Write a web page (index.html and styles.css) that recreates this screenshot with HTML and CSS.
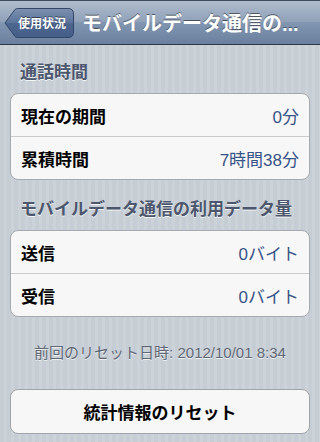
FILE: index.html
```html
<!DOCTYPE html>
<html lang="ja">
<head>
    <meta charset="UTF-8">
    <meta name="viewport" content="width=device-width, initial-scale=1.0">
    <title>モバイルデータ通信</title>
    <link rel="stylesheet" href="styles.css">
</head>
<body>

    <div class="navbar">
        <a class="back-button" href="#">
            <svg class="back-shape" width="70" height="30" viewBox="0 0 70 30">
                <defs>
                    <linearGradient id="backFill" x1="0" y1="0" x2="0" y2="1">
                        <stop offset="0" stop-color="#7d91b0"/>
                        <stop offset="0.5" stop-color="#5a739b"/>
                        <stop offset="0.5" stop-color="#4d678f"/>
                        <stop offset="1" stop-color="#445e88"/>
                    </linearGradient>
                </defs>
                <path d="M1 15 L11 1.5 Q12 0.5 13.5 0.5 L64 0.5 Q69.5 0.5 69.5 6 L69.5 24 Q69.5 29.5 64 29.5 L13.5 29.5 Q12 29.5 11 28.5 Z" fill="url(#backFill)" stroke="#34476a" stroke-width="1"/>
            </svg>
            <span class="back-label">使用状況</span>
        </a>
        <h1 class="nav-title">モバイルデータ通信の...</h1>
    </div>

    <div class="content">
        <h2 class="section-title first">通話時間</h2>
        <div class="group">
            <div class="row">
                <span class="row-label">現在の期間</span>
                <span class="row-value">0分</span>
            </div>
            <div class="row">
                <span class="row-label">累積時間</span>
                <span class="row-value">7時間38分</span>
            </div>
        </div>

        <h2 class="section-title">モバイルデータ通信の利用データ量</h2>
        <div class="group">
            <div class="row">
                <span class="row-label">送信</span>
                <span class="row-value">0バイト</span>
            </div>
            <div class="row">
                <span class="row-label">受信</span>
                <span class="row-value">0バイト</span>
            </div>
        </div>

        <p class="footer-note">前回のリセット日時: 2012/10/01 8:34</p>

        <button class="reset-button" type="button">統計情報のリセット</button>
    </div>

</body>
</html>
```

FILE: styles.css
```css
body {
    margin: 0;
    font-family: "Liberation Sans", "Noto Sans CJK JP", sans-serif;
    background-color: #c7ced5;
    background-image: repeating-linear-gradient(90deg, #c6cdd4 0, #c6cdd4 4px, #cbd2d8 4px, #cbd2d8 7px);
    height: 442px;
    overflow: hidden;
}
.navbar {
    height: 45px;
    display: flex;
    align-items: center;
    padding-left: 4px;
    background: linear-gradient(#b0bccd, #8ea0b8 50%, #8196b0 50%, #6a809f);
    border-top: 1px solid #3c4a62;
    border-bottom: 1px solid #2d3642;
    box-sizing: border-box;
}
.back-button {
    position: relative;
    width: 70px;
    height: 30px;
    display: flex;
    align-items: center;
    justify-content: center;
    padding-left: 6px;
    box-sizing: border-box;
    text-decoration: none;
    flex-shrink: 0;
}
.back-shape {
    position: absolute;
    top: 0;
    left: 0;
}
.back-label {
    position: relative;
    color: white;
    font-size: 12px;
    font-weight: bold;
    text-shadow: 0 -1px 0 rgba(0, 0, 0, 0.5);
}
.nav-title {
    margin: 0 0 0 8px;
    color: white;
    font-size: 20px;
    font-weight: bold;
    white-space: nowrap;
    text-shadow: 0 -1px 0 rgba(0, 0, 0, 0.5);
}
.content {
    padding: 0 10px;
}
.section-title {
    margin: 0 10px 10px;
    font-size: 17px;
    line-height: 20px;
    font-weight: bold;
    color: #4c566c;
    text-shadow: 0 1px 0 rgba(255, 255, 255, 0.8);
}
.section-title.first {
    margin-top: 18px;
}
.group {
    background-color: #f7f7f7;
    border: 1px solid #a5a9b0;
    border-radius: 8px;
    margin-bottom: 20px;
}
.row {
    height: 42px;
    display: flex;
    align-items: center;
    justify-content: space-between;
    padding: 0 10px;
}
.row + .row {
    border-top: 1px solid #cbcbcb;
}
.row-label {
    font-size: 17px;
    font-weight: bold;
    color: black;
}
.row-value {
    font-size: 17px;
    color: #385487;
}
.footer-note {
    margin: 27px 0;
    text-align: center;
    font-size: 15px;
    line-height: 18px;
    color: #5f6775;
    text-shadow: 0 1px 0 rgba(255, 255, 255, 0.7);
}
.reset-button {
    display: block;
    width: 100%;
    height: 45px;
    background-color: #f7f7f7;
    border: 1px solid #a0a4ab;
    border-radius: 8px;
    font-family: inherit;
    font-size: 17px;
    font-weight: bold;
    color: black;
}
```
